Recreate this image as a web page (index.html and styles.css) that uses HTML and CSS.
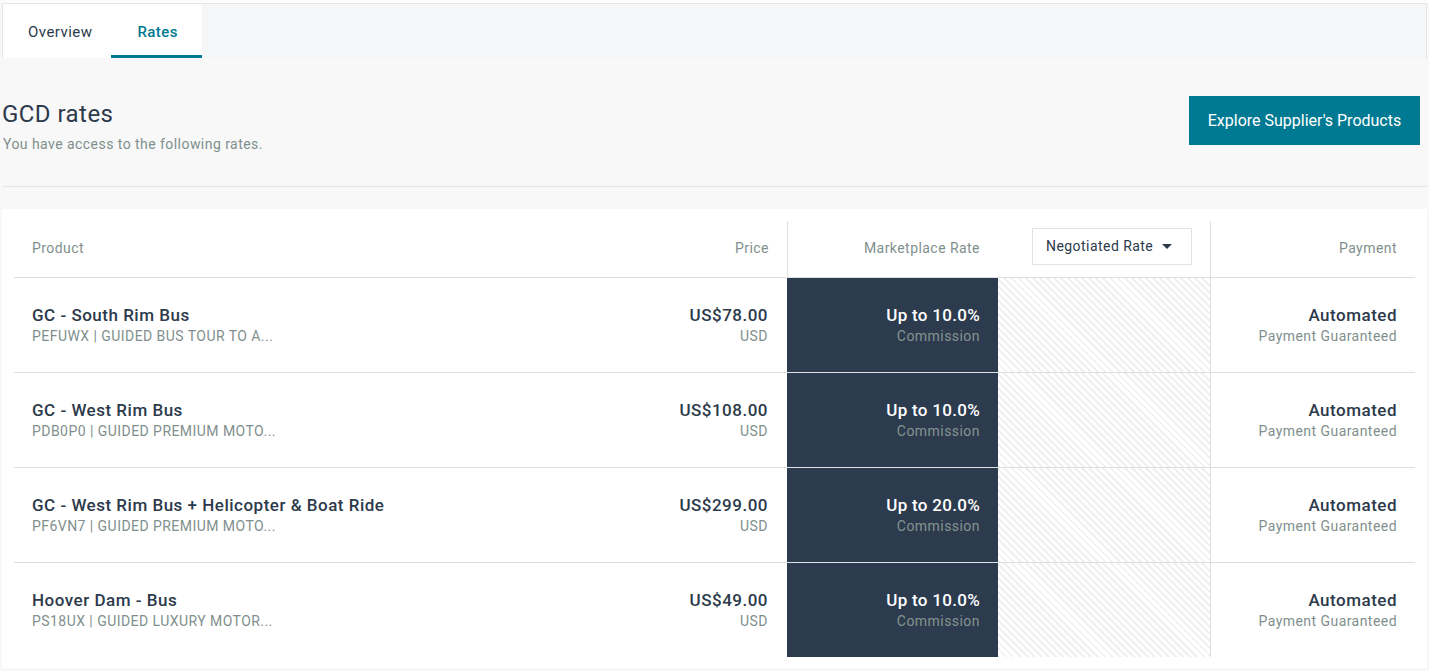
FILE: index.html
```html
<!DOCTYPE html>
<html>
<head>
<meta charset="utf-8">
<link rel="stylesheet" href="styles.css">
</head>
<body>
<div class="page">
  <nav class="tabbar">
    <div class="tabs">
      <a class="tab">Overview</a>
      <a class="tab active">Rates</a>
    </div>
  </nav>

  <header class="head">
    <div class="head-text">
      <h1 class="title">GCD rates</h1>
      <p class="subtitle">You have access to the following rates.</p>
    </div>
    <button class="btn">Explore Supplier's Products</button>
  </header>

  <section class="card">
    <div class="table">
      <div class="th th-product">Product</div>
      <div class="th th-price">Price</div>
      <div class="th th-market">Marketplace Rate</div>
      <div class="th th-neg">
        <div class="dropdown">Negotiated Rate
          <svg class="caret" width="10" height="5" viewBox="0 0 10 5"><path d="M0 0h10L5 5z" fill="#2c3a4b"/></svg>
        </div>
      </div>
      <div class="th th-pay">Payment</div>

      <div class="td product"><div class="main">GC - South Rim Bus</div><div class="sub">PEFUWX | GUIDED BUS TOUR TO A...</div></div>
      <div class="td price"><div class="main">US$78.00</div><div class="sub">USD</div></div>
      <div class="td market"><div class="main">Up to 10.0%</div><div class="sub">Commission</div></div>
      <div class="td neg"></div>
      <div class="td pay"><div class="main">Automated</div><div class="sub">Payment Guaranteed</div></div>

      <div class="td product"><div class="main">GC - West Rim Bus</div><div class="sub">PDB0P0 | GUIDED PREMIUM MOTO...</div></div>
      <div class="td price"><div class="main">US$108.00</div><div class="sub">USD</div></div>
      <div class="td market"><div class="main">Up to 10.0%</div><div class="sub">Commission</div></div>
      <div class="td neg"></div>
      <div class="td pay"><div class="main">Automated</div><div class="sub">Payment Guaranteed</div></div>

      <div class="td product"><div class="main">GC - West Rim Bus + Helicopter &amp; Boat Ride</div><div class="sub">PF6VN7 | GUIDED PREMIUM MOTO...</div></div>
      <div class="td price"><div class="main">US$299.00</div><div class="sub">USD</div></div>
      <div class="td market"><div class="main">Up to 20.0%</div><div class="sub">Commission</div></div>
      <div class="td neg"></div>
      <div class="td pay"><div class="main">Automated</div><div class="sub">Payment Guaranteed</div></div>

      <div class="td product last"><div class="main">Hoover Dam - Bus</div><div class="sub">PS18UX | GUIDED LUXURY MOTOR...</div></div>
      <div class="td price last"><div class="main">US$49.00</div><div class="sub">USD</div></div>
      <div class="td market last"><div class="main">Up to 10.0%</div><div class="sub">Commission</div></div>
      <div class="td neg last"></div>
      <div class="td pay last"><div class="main">Automated</div><div class="sub">Payment Guaranteed</div></div>
    </div>
  </section>
</div>
</body>
</html>
```

FILE: styles.css
```css
* { box-sizing: border-box; }
html, body { margin: 0; padding: 0; }
body {
  background: #f8f8f8;
  font-family: Roboto, "Liberation Sans", Arial, sans-serif;
  color: #2c3a4b;
  letter-spacing: 0.45px;
  width: 1429px;
  height: 671px;
  overflow: hidden;
}
.page {
  padding: 3px 2px 0 2px;
  background: linear-gradient(#fcfcfc 0 3px, #f8f8f8 3px);
}
.tabbar {
  height: 55px;
  border: 1px solid #e3e5e8;
  border-bottom: none;
  background: #f5f6f8;
  display: flex;
}
.tabs {
  display: flex;
  background: #fff;
  height: 100%;
}
.tab {
  display: flex;
  align-items: center;
  justify-content: center;
  height: 100%;
  font-size: 15px;
  color: #2c3a4b;
  padding: 4px 19px 0 25px;
  border-bottom: 3px solid transparent;
}
.tab.active {
  color: #007a92;
  font-weight: 500;
  border-bottom-color: #007a92;
  padding: 4px 24px 0 26px;
}
.head {
  display: flex;
  justify-content: space-between;
  align-items: flex-start;
  padding: 38px 7px 32px 0;
  border-bottom: 1px solid #e6e6e6;
}
.title {
  margin: 3px 0 0 0;
  font-size: 24px;
  line-height: 30px;
  font-weight: 400;
  color: #2c3a4b;
}
.subtitle {
  margin: 5px 0 0 1px;
  font-size: 14px;
  line-height: 20px;
  color: #7f8f8d;
}
.btn {
  height: 49px;
  width: 231px;
  border: none;
  background: #007a92;
  color: #fff;
  font-family: inherit;
  font-size: 16px;
  letter-spacing: 0;
  padding: 0;
}
.card {
  margin-top: 22px;
  background: #fff;
  padding: 12px 12px 11px 12px;
  height: 459px;
}
.table {
  display: grid;
  grid-template-columns: 1fr 160px 211px 212px 205px;
  grid-template-rows: 57px 95px 95px 95px 94px;
}
.th {
  display: flex;
  align-items: center;
  font-size: 14px;
  color: #7f8f8d;
  border-bottom: 1px solid #dcdfe1;
  padding: 0 18px 2px 18px;
}
.th-price, .th-market, .th-neg, .th-pay { justify-content: flex-end; }
.th-market { border-left: 1px solid #dcdfe1; }
.th-pay { border-left: 1px solid #dcdfe1; }
.dropdown {
  width: 160px;
  height: 37px;
  border: 1px solid #dfe3e6;
  display: flex;
  align-items: center;
  padding: 0 14px 0 13px;
  color: #2c3a4b;
  font-size: 14px;
  gap: 9px;
  margin-top: -4px;
}
.td {
  display: flex;
  flex-direction: column;
  justify-content: center;
  padding: 0 18px;
  border-bottom: 1px solid #dcdfe1;
}
.td.last { border-bottom: none; }
.price { padding-right: 19px; }
.price, .market, .pay { align-items: flex-end; }
.main {
  font-size: 17px;
  line-height: 22px;
  font-weight: 500;
  letter-spacing: 0.5px;
  color: #2c3a4b;
  white-space: nowrap;
}
.sub {
  font-size: 14px;
  line-height: 20px;
  color: #7f8f8d;
  white-space: nowrap;
}
.market {
  background: #2c3b4e;
  border-bottom-color: #e1e4e6;
}
.market .main { color: #fff; letter-spacing: 0.3px; }
.market .sub { color: #86948f; }
.neg {
  background: repeating-linear-gradient(45deg, #eef0f2 0 2px, #fff 2px 5px);
}
.pay { border-left: 1px solid #dcdfe1; }
```
